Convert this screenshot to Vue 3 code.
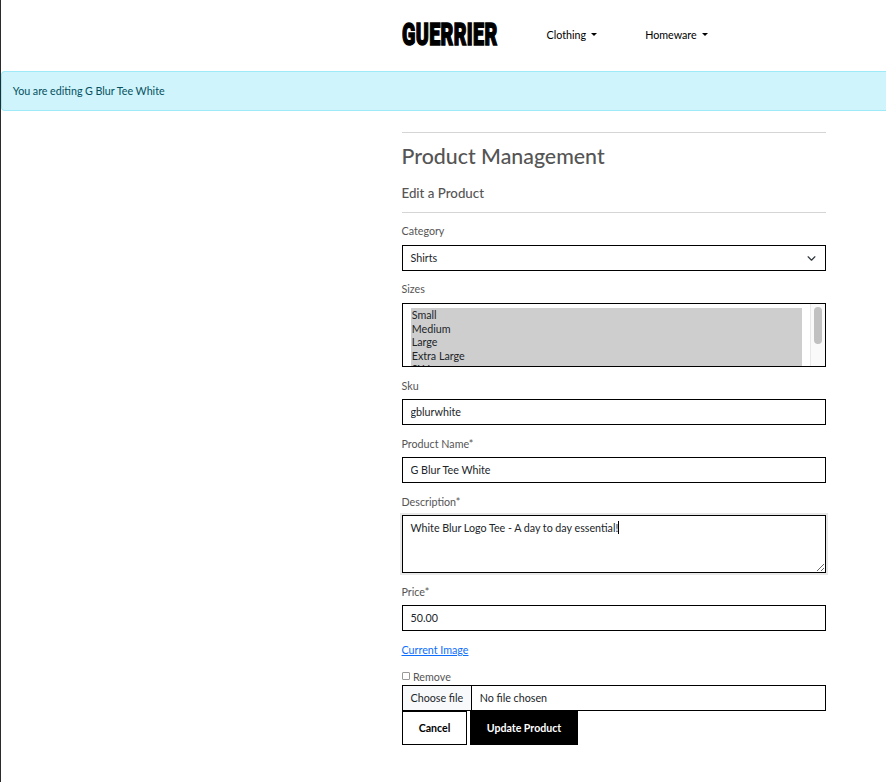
<script setup>
import { ref } from 'vue'
const sizes = ['Small', 'Medium', 'Large', 'Extra Large', 'SX Large']
const menus = ['Clothing', 'Homeware']
const sku = ref('gblurwhite')
const name = ref('G Blur Tee White')
const price = ref('50.00')
</script>

<template>
  <div class="page">
    <header class="header">
      <div class="logo"><span>GUERRIER</span></div>
      <nav class="nav">
        <a v-for="m in menus" :key="m" class="nav-link">{{ m }}<i class="caret"></i></a>
      </nav>
    </header>
    <div class="alert">You are editing G Blur Tee White</div>
    <main class="main">
      <div class="intro">
        <h2>Product Management</h2>
        <h5>Edit a Product</h5>
      </div>
      <form @submit.prevent>
        <div class="group">
          <label>Category</label>
          <div class="control select">
            <span>Shirts</span>
            <svg width="9" height="9" viewBox="0 0 16 16"><path d="m2 5 6 6 6-6" fill="none" stroke="#343a40" stroke-width="2.2" stroke-linecap="round" stroke-linejoin="round" /></svg>
          </div>
        </div>
        <div class="group">
          <label>Sizes</label>
          <div class="list">
            <div class="options"><div v-for="s in sizes" :key="s" class="option">{{ s }}</div></div>
            <div class="track"><div class="thumb"></div></div>
          </div>
        </div>
        <div class="group low">
          <label>Sku</label>
          <input v-model="sku" class="control" type="text" />
        </div>
        <div class="group low">
          <label>Product Name*</label>
          <input v-model="name" class="control" type="text" />
        </div>
        <div class="group low">
          <label>Description*</label>
          <div class="area">
            <span>White Blur Logo Tee - A day to day essential!</span><i class="cursor"></i>
            <svg class="grip" width="9" height="9" viewBox="0 0 9 9"><path d="M1 8 8 1M5 8l3-3" stroke="#666" stroke-width="1" fill="none" /></svg>
          </div>
        </div>
        <div class="group low">
          <label>Price*</label>
          <input v-model="price" class="control" type="text" />
        </div>
        <a class="link">Current Image</a>
        <div class="remove"><i class="box"></i><span>Remove</span></div>
        <div class="file"><span class="choose">Choose file</span><span class="none">No file chosen</span></div>
        <div class="actions">
          <button class="btn" type="button">Cancel</button>
          <button class="btn dark" type="submit">Update Product</button>
        </div>
      </form>
    </main>
  </div>
</template>

<style>
body { margin: 0; background: #fff; overflow: hidden; }
</style>

<style scoped>
* { box-sizing: border-box; }
.page { height: 782px; border-left: 1px solid #2b2b2b; font: 400 10.72px/16px Lato, sans-serif; color: #555; }
.header { height: 71px; display: flex; align-items: center; padding: 0 0 2px 401px; }
.logo { flex: none; width: 96px; height: 38px; }
.logo span { display: block; width: max-content; font: 900 31px/38px Roboto, sans-serif; color: #000; -webkit-text-stroke: 1.5px #000; letter-spacing: 0.5px; transform: scaleX(0.635); transform-origin: 0 50%; }
.nav { display: flex; gap: 48px; padding-left: 48.5px; color: #000; }
.nav-link { display: flex; align-items: center; }
.caret { margin-left: 5px; border: 3.2px solid transparent; border-top-color: #000; border-bottom: 0; }
.alert { height: 40px; padding: 11px 10.7px; border: 1px solid #9eeaf9; border-right: 0; border-radius: 4px 0 0 4px; background: #cff4fc; color: #055160; word-spacing: -0.15px; }
.main { width: 424px; margin: 21px 0 0 401px; }
.intro { height: 81px; border-top: 1px solid #d5d5d5; border-bottom: 1px solid #d5d5d5; }
h2, h5 { margin: 0; font-weight: 500; text-indent: -0.5px; }
h2 { font-size: 21.35px; line-height: 26px; padding-top: 10px; }
h5 { font-size: 13.3px; line-height: 16px; margin-top: 16px; }
form { padding-top: 10px; }
.group { margin-bottom: 10px; }
label { display: block; margin-bottom: 6px; text-indent: -0.5px; }
.low label { padding-top: 1px; margin-bottom: 5px; }
.control { display: block; width: 100%; height: 26px; border: 1px solid #000; border-radius: 0; background: #fff; padding: 3px 8px 5px 7.5px; font: inherit; color: #212529; outline: 0; }
.select { display: flex; justify-content: space-between; align-items: center; padding: 4px 9px 4px 7.5px; }
.list { display: flex; height: 64px; border: 1px solid #000; overflow: hidden; }
.options { flex: 1; margin: 4px 8px 0; color: #212529; }
.option { height: 13.5px; line-height: 14px; padding-left: 0.7px; background: #cecece; }
.option:nth-child(2) { line-height: 13px; }
.track { width: 15px; border-left: 1px solid #e8e8e8; background: #fafafa; padding: 3px 3px; }
.thumb { width: 8px; height: 37px; border-radius: 4px; background: #c1c1c1; }
.area { position: relative; display: flex; height: 58px; border: 1px solid #000; padding: 4px 7.5px; color: #212529; word-spacing: -0.1px; box-shadow: 0 0 0 2px #e8e8e8; }
.cursor { width: 1px; height: 13px; margin: 1px 0 0 -0.5px; background: #000; }
.grip { position: absolute; right: 0; bottom: 0; }
.link { display: block; width: max-content; margin: 11px 0 0 -0.5px; color: #0d6efd; text-decoration: underline; }
.remove { display: flex; align-items: center; gap: 3px; margin-top: 11px; height: 16px; }
.box { width: 8px; height: 8px; margin-bottom: 2px; border: 1px solid #999; border-radius: 1px; }
.file { display: flex; height: 26px; border: 1px solid #000; color: #212529; line-height: 24px; }
.choose { width: 69px; padding-left: 7.5px; background: #f8f9fa; border-right: 1px solid #000; }
.none { padding-left: 7.7px; }
.actions { display: flex; gap: 3px; }
.btn { width: 65px; height: 34px; padding: 0; border: 1px solid #000; background: #fff; color: #000; font: 700 10.6px/16px Lato, sans-serif; }
.dark { width: 108px; background: #000; color: #fff; }
</style>
